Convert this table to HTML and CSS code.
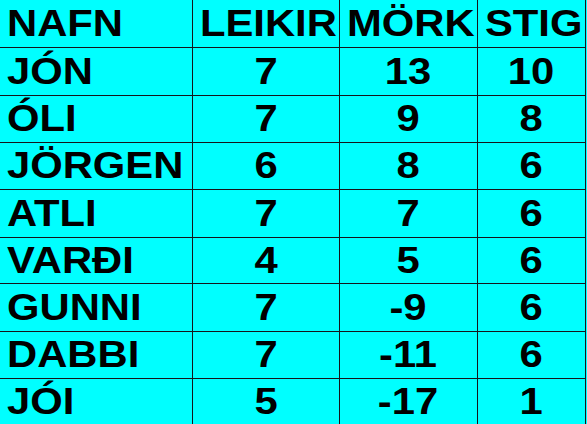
FILE: index.html
```html
<!DOCTYPE html>
<html lang="is">
<head>
<meta charset="utf-8">
<title>Stigatafla</title>
<link rel="stylesheet" href="styles.css">
</head>
<body>
<div class="board">
  <div class="cell head"><span class="t">NAFN</span></div>
  <div class="cell head"><span class="t">LEIKIR</span></div>
  <div class="cell head"><span class="t">MÖRK</span></div>
  <div class="cell head"><span class="t">STIG</span></div>

  <div class="cell name"><span class="t">JÓN</span></div>
  <div class="cell num"><span class="t">7</span></div>
  <div class="cell num"><span class="t">13</span></div>
  <div class="cell num"><span class="t">10</span></div>

  <div class="cell name"><span class="t">ÓLI</span></div>
  <div class="cell num"><span class="t">7</span></div>
  <div class="cell num"><span class="t">9</span></div>
  <div class="cell num"><span class="t">8</span></div>

  <div class="cell name"><span class="t">JÖRGEN</span></div>
  <div class="cell num"><span class="t">6</span></div>
  <div class="cell num"><span class="t">8</span></div>
  <div class="cell num"><span class="t">6</span></div>

  <div class="cell name"><span class="t">ATLI</span></div>
  <div class="cell num"><span class="t">7</span></div>
  <div class="cell num"><span class="t">7</span></div>
  <div class="cell num"><span class="t">6</span></div>

  <div class="cell name"><span class="t">VARÐI</span></div>
  <div class="cell num"><span class="t">4</span></div>
  <div class="cell num"><span class="t">5</span></div>
  <div class="cell num"><span class="t">6</span></div>

  <div class="cell name"><span class="t">GUNNI</span></div>
  <div class="cell num"><span class="t">7</span></div>
  <div class="cell num"><span class="t">-9</span></div>
  <div class="cell num"><span class="t">6</span></div>

  <div class="cell name"><span class="t">DABBI</span></div>
  <div class="cell num"><span class="t">7</span></div>
  <div class="cell num"><span class="t">-11</span></div>
  <div class="cell num"><span class="t">6</span></div>

  <div class="cell name last"><span class="t">JÓI</span></div>
  <div class="cell num last"><span class="t">5</span></div>
  <div class="cell num last"><span class="t">-17</span></div>
  <div class="cell num last"><span class="t">1</span></div>
</div>
</body>
</html>
```
FILE: styles.css
```css
html, body {
  margin: 0;
  padding: 0;
  background: #00ffff;
}

body {
  width: 587px;
  height: 424px;
  overflow: hidden;
  font-family: "Liberation Sans", Arial, sans-serif;
  font-weight: bold;
  font-size: 36px;
  color: #000;
}

.board {
  display: grid;
  grid-template-columns: 193px 147px 138px 108px;
  grid-template-rows: 48px 48px 47px 47px 48px 46px 48px 47px 45px;
  width: 586px;
  height: 424px;
}

.cell {
  display: flex;
  align-items: center;
  box-sizing: border-box;
  border-right: 1px solid #15151c;
  border-bottom: 1px solid #15151c;
  line-height: 1;
  white-space: nowrap;
}

.cell.last {
  border-bottom: none;
}

.head,
.name {
  justify-content: flex-start;
  padding-left: 7px;
}

.num {
  justify-content: center;
}

.t {
  display: inline-block;
  transform: scaleX(1.16);
}

.head .t,
.name .t {
  transform-origin: left center;
}

.num .t {
  transform-origin: center center;
}
```
